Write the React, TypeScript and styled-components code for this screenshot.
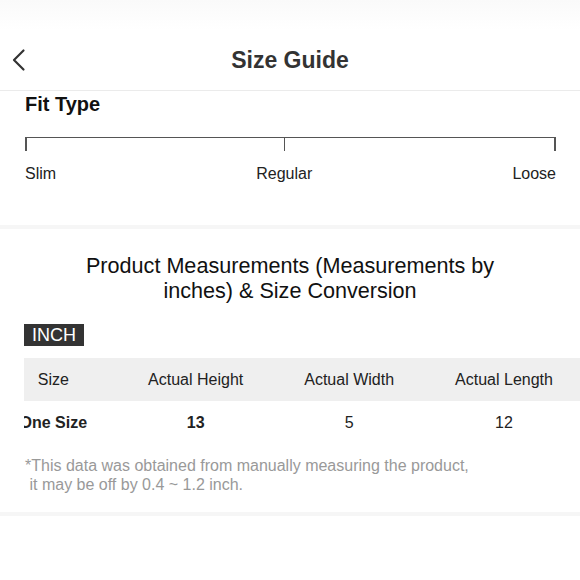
import styled, { createGlobalStyle } from "styled-components";

const GlobalStyle = createGlobalStyle`
  body {
    margin: 0;
    background: #ffffff;
    font-family: "Liberation Sans", Arial, sans-serif;
    color: #222;
  }
`;

const columns = ["Size", "Actual Height", "Actual Width", "Actual Length"];
const rows = [{ size: "One Size", height: "13", width: "5", length: "12" }];

const BackIcon = () => (
  <svg width="14" height="24" viewBox="0 0 14 24" fill="none">
    <polyline
      points="11.5,2.5 2,12 11.5,21.5"
      stroke="#333"
      strokeWidth="2.2"
      strokeLinecap="round"
      strokeLinejoin="round"
    />
  </svg>
);

const App = () => {
  return (
    <Page>
      <GlobalStyle />
      <StatusBar />
      <Header>
        <BackButton>
          <BackIcon />
        </BackButton>
        <Title>Size Guide</Title>
        <span />
      </Header>

      <FitSection>
        <SectionTitle>Fit Type</SectionTitle>
        <Scale>
          <Mark align="flex-start">
            <Tick />
            <MarkLabel>Slim</MarkLabel>
          </Mark>
          <Mark align="center">
            <Tick />
            <MarkLabel>Regular</MarkLabel>
          </Mark>
          <Mark align="flex-end">
            <Tick />
            <MarkLabel>Loose</MarkLabel>
          </Mark>
        </Scale>
      </FitSection>

      <Band />

      <MeasureSection>
        <MeasureTitle>
          Product Measurements (Measurements by inches) &amp; Size Conversion
        </MeasureTitle>
        <UnitBadge>INCH</UnitBadge>
        <TableScroll>
          <Table>
            <thead>
              <tr>
                {columns.map((c) => (
                  <HeadCell key={c}>{c}</HeadCell>
                ))}
              </tr>
            </thead>
            <tbody>
              {rows.map((r) => (
                <tr key={r.size}>
                  <Cell bold>{r.size}</Cell>
                  <Cell bold>{r.height}</Cell>
                  <Cell>{r.width}</Cell>
                  <Cell>{r.length}</Cell>
                </tr>
              ))}
            </tbody>
          </Table>
        </TableScroll>
        <Note>
          {"*This data was obtained from manually measuring the product,\n it may be off by 0.4 ~ 1.2 inch."}
        </Note>
      </MeasureSection>

      <Band />
    </Page>
  );
};

export default App;

const Page = styled.div`
  width: 580px;
  height: 580px;
  overflow: hidden;
  background: #fff;
`;

const StatusBar = styled.div`
  height: 30px;
  background: linear-gradient(180deg, #fafafa 0%, #fdfdfd 60%, #ffffff 100%);
`;

const Header = styled.div`
  display: grid;
  grid-template-columns: 60px 1fr 60px;
  align-items: center;
  height: 60px;
  border-bottom: 1px solid #ebebeb;
`;

const BackButton = styled.div`
  display: flex;
  align-items: center;
  padding-left: 12px;
  cursor: pointer;
`;

const Title = styled.div`
  text-align: center;
  font-size: 23px;
  font-weight: 700;
  color: #333;
`;

const FitSection = styled.div`
  padding: 2px 24px 42px 24px;
`;

const SectionTitle = styled.div`
  font-size: 20px;
  font-weight: 700;
  line-height: 23px;
  color: #111;
  padding-left: 1px;
`;

const Scale = styled.div`
  display: flex;
  justify-content: space-between;
  margin: 21px 0 0 1px;
  border-top: 1.5px solid #555;
`;

const Mark = styled.div<{ align: string }>`
  display: flex;
  flex-direction: column;
  align-items: ${(p) => p.align};
`;

const Tick = styled.div`
  width: 1.5px;
  height: 13px;
  background: #555;
`;

const MarkLabel = styled.div`
  margin-top: 14px;
  font-size: 16px;
  line-height: 18px;
  color: #222;
`;

const Band = styled.div`
  height: 4px;
  background: #f6f6f6;
`;

const MeasureSection = styled.div`
  padding: 24px 0 18px 0;
`;

const MeasureTitle = styled.div`
  padding: 0 60px;
  text-align: center;
  font-size: 21.6px;
  line-height: 25px;
  color: #111;
`;

const UnitBadge = styled.div`
  display: inline-block;
  margin: 21px 0 0 24px;
  padding: 0 8px;
  height: 22px;
  line-height: 22px;
  font-size: 18px;
  color: #fff;
  background: #333;
`;

const TableScroll = styled.div`
  margin: 12px 0 0 24px;
  overflow: hidden;
`;

const Table = styled.table`
  margin-left: -35px;
  border-collapse: collapse;
  font-size: 16px;
`;

const HeadCell = styled.th`
  height: 43px;
  padding: 0 30.5px;
  font-weight: 400;
  white-space: nowrap;
  text-align: center;
  color: #222;
  background: #efefef;
`;

const Cell = styled.td<{ bold?: boolean }>`
  height: 44px;
  padding: 0 30.5px;
  white-space: nowrap;
  text-align: center;
  font-weight: ${(p) => (p.bold ? 700 : 400)};
  color: #222;
`;

const Note = styled.div`
  margin: 11px 0 0 25px;
  font-size: 16px;
  line-height: 19px;
  color: #999;
  white-space: pre-wrap;
`;
